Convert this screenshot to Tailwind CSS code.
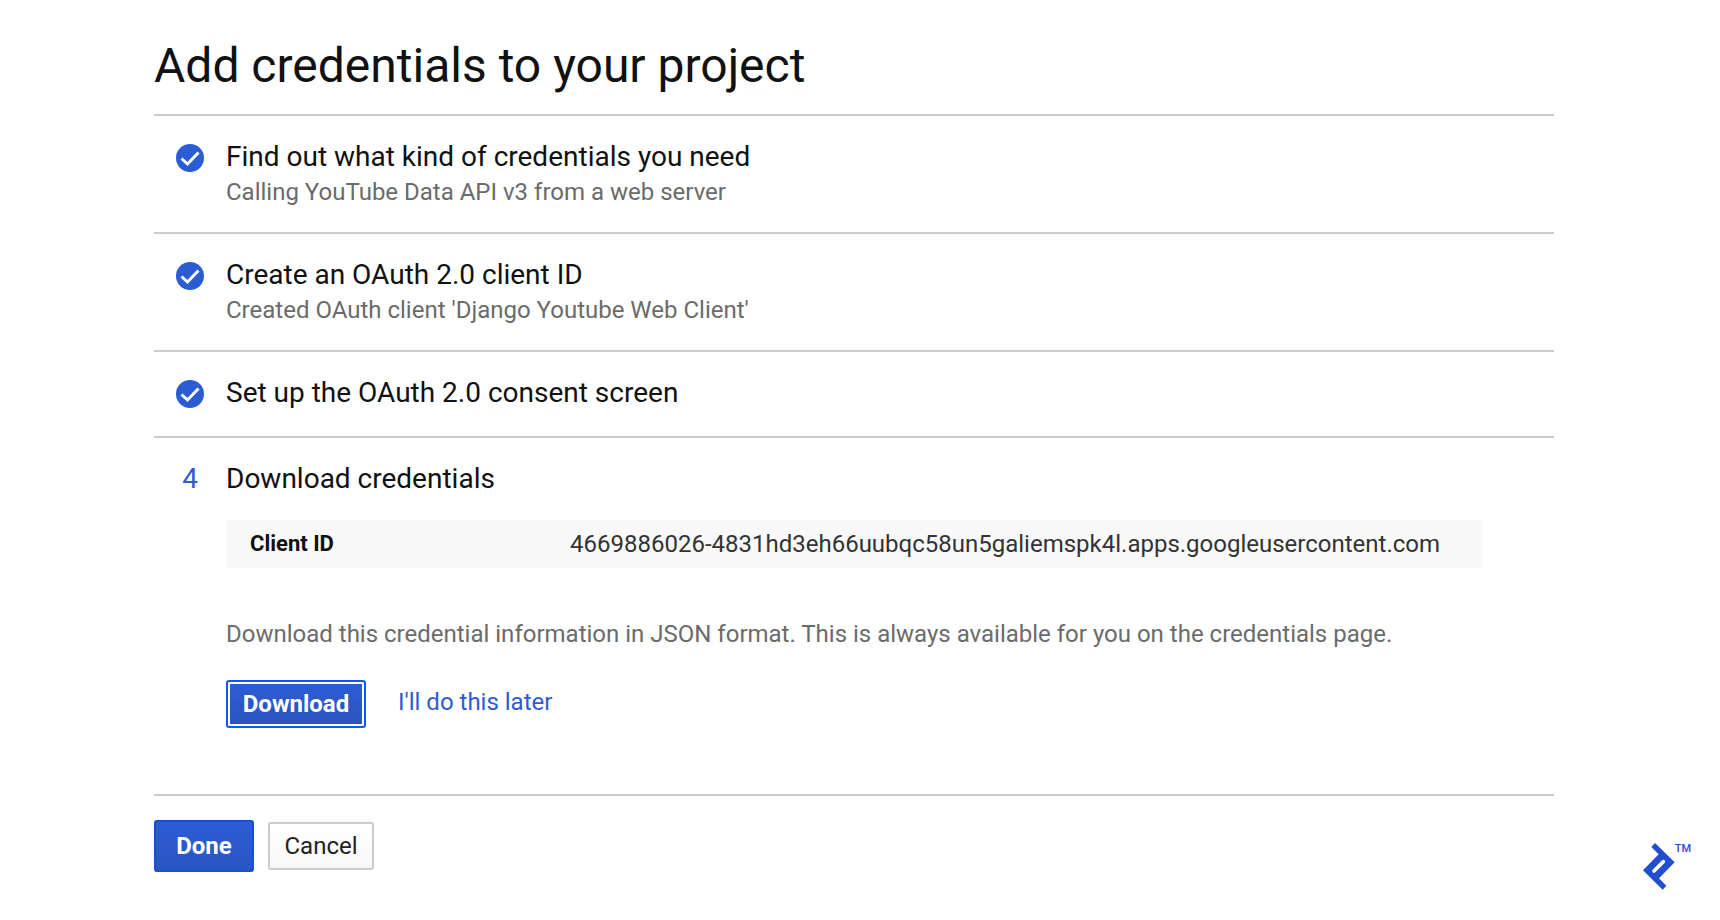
<!DOCTYPE html>
<html lang="en">
<head>
    <meta charset="utf-8" />
    <meta name="viewport" content="width=device-width, initial-scale=1" />
    <title>Add credentials to your project</title>
    <!-- TailwindCSS (CDN) -->
    <script src="https://cdn.jsdelivr.net/npm/@tailwindcss/browser@4"></script>
</head>
<body class="bg-white text-[#111111] font-[Roboto,sans-serif]">
<main class="pl-[154px] pr-[166px] pt-9 pb-12">
    <h1 class="text-[48px] leading-[60px] pb-[18px]">Add credentials to your project</h1>

    <!-- Steps -->
    <ol>
        <li class="flex border-t-2 border-[#cccccc] pt-[22px] pb-6">
            <div class="w-[72px] h-[38px] shrink-0 flex items-center justify-center">
                <svg class="size-7 mt-0.5" viewBox="0 0 28 28" fill="none">
                    <circle cx="14" cy="14" r="14" fill="#2b5cd3" />
                    <path d="M5.5 14.5l6 5.5L22.5 8.5" stroke="#fff" stroke-width="3" />
                </svg>
            </div>
            <div>
                <h2 class="text-[28px] leading-[38px]">Find out what kind of credentials you need</h2>
                <p class="text-2xl leading-8 text-[#6b6b6b]">Calling YouTube Data API v3 from a web server</p>
            </div>
        </li>
        <li class="flex border-t-2 border-[#cccccc] pt-[22px] pb-6">
            <div class="w-[72px] h-[38px] shrink-0 flex items-center justify-center">
                <svg class="size-7 mt-0.5" viewBox="0 0 28 28" fill="none">
                    <circle cx="14" cy="14" r="14" fill="#2b5cd3" />
                    <path d="M5.5 14.5l6 5.5L22.5 8.5" stroke="#fff" stroke-width="3" />
                </svg>
            </div>
            <div>
                <h2 class="text-[28px] leading-[38px]">Create an OAuth 2.0 client ID</h2>
                <p class="text-2xl leading-8 text-[#6b6b6b]">Created OAuth client 'Django Youtube Web Client'</p>
            </div>
        </li>
        <li class="flex border-t-2 border-[#cccccc] pt-[22px] pb-6">
            <div class="w-[72px] h-[38px] shrink-0 flex items-center justify-center">
                <svg class="size-7 mt-0.5" viewBox="0 0 28 28" fill="none">
                    <circle cx="14" cy="14" r="14" fill="#2b5cd3" />
                    <path d="M5.5 14.5l6 5.5L22.5 8.5" stroke="#fff" stroke-width="3" />
                </svg>
            </div>
            <h2 class="text-[28px] leading-[38px]">Set up the OAuth 2.0 consent screen</h2>
        </li>
        <li class="flex border-y-2 border-[#cccccc] pt-[22px] pb-[66px]">
            <div class="w-[72px] shrink-0 text-center text-[28px] leading-[38px] text-[#2b5cd3]">4</div>
            <div class="grow pr-[72px]">
                <h2 class="text-[28px] leading-[38px]">Download credentials</h2>
                <table class="mt-[22px] w-full bg-[#f9f9f9] text-2xl leading-9">
                    <tbody>
                        <tr class="h-12">
                            <th scope="row" class="w-[344px] pl-6 text-left text-[22px] font-bold">Client ID</th>
                            <td class="text-[#333333]">4669886026-4831hd3eh66uubqc58un5galiemspk4l.apps.googleusercontent.com</td>
                        </tr>
                    </tbody>
                </table>
                <p class="mt-12 text-2xl leading-9 text-[#6b6b6b]">Download this credential information in JSON format. This is always available for you on the credentials page.</p>
                <div class="mt-7 flex items-center gap-8">
                    <button type="button" class="w-[140px] h-12 rounded-[3px] border-2 border-[#0b57ff] bg-white p-[2px] text-2xl font-bold text-white">
                        <span class="flex h-full items-center justify-center bg-linear-to-b from-[#2d5dd3] to-[#2a53bf]">Download</span>
                    </button>
                    <a href="#" class="pb-1 text-2xl leading-9 text-[#2b5cd3]">I'll do this later</a>
                </div>
            </div>
        </li>
    </ol>

    <!-- Actions -->
    <div class="mt-6 flex items-center gap-[14px]">
        <button type="button" class="w-[100px] h-[52px] rounded-[3px] border-2 border-[#1650cc] bg-linear-to-b from-[#2d5dd3] to-[#2a55c4] text-2xl font-bold text-white">Done</button>
        <button type="button" class="w-[106px] h-12 rounded-[3px] border-2 border-[#cccccc] bg-linear-to-b from-white to-[#f8f8f8] text-2xl text-[#222222]">Cancel</button>
    </div>
</main>

<!-- Watermark -->
<div class="absolute right-[29px] bottom-[30px] flex items-start">
    <svg class="w-8 h-[47px]" viewBox="0 0 96 141" fill="none">
        <path d="M36 0L95 58L48 106L70 128L59 140L0 82L47 34L25 12Z" fill="#204ecf" />
        <path d="M61 56L33 84" stroke="#fff" stroke-width="11" stroke-linecap="round" />
    </svg>
    <span class="text-[11px] leading-3 font-medium text-[#204ecf]">TM</span>
</div>
</body>
</html>
